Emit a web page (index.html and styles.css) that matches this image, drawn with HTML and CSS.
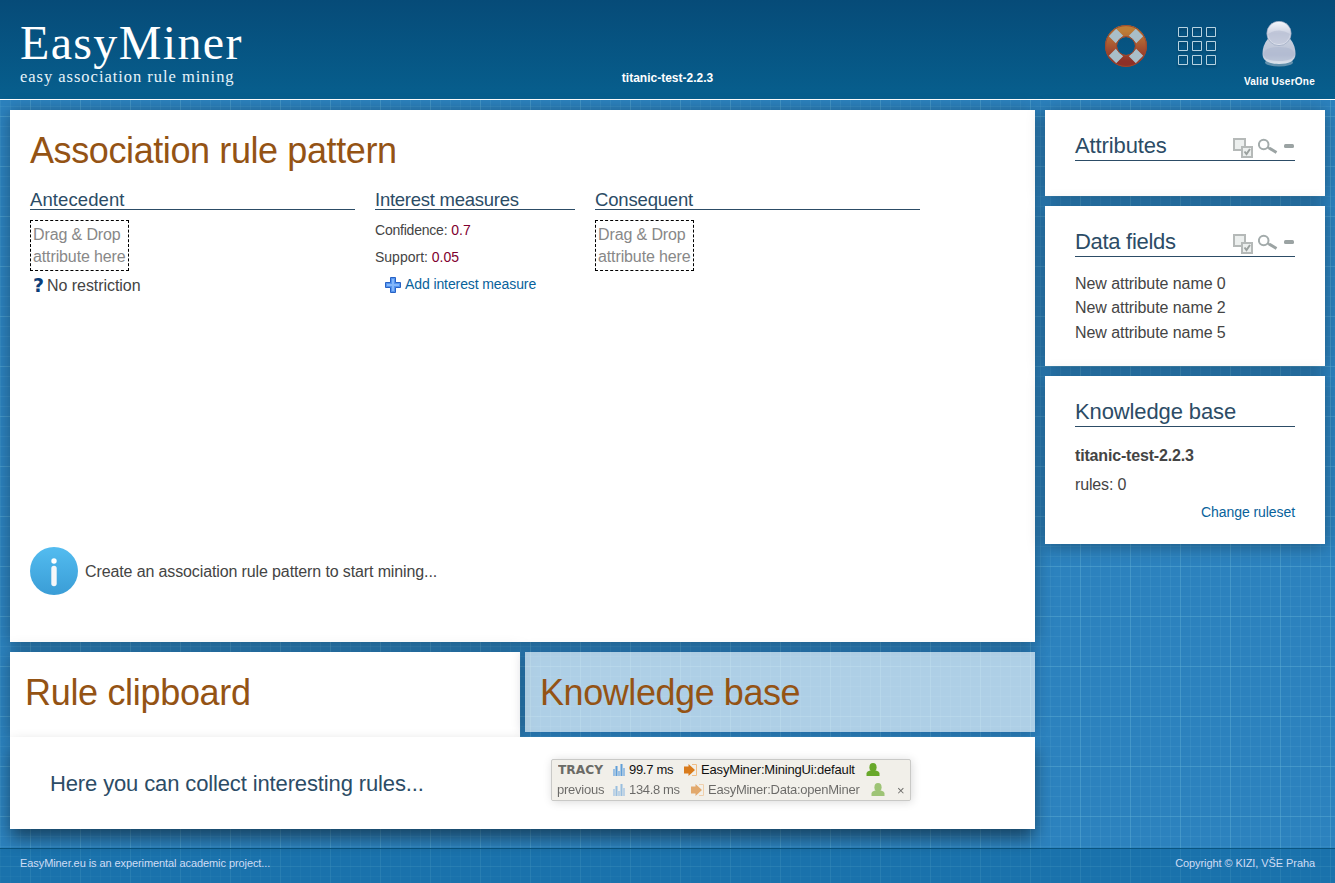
FILE: index.html
```html
<!DOCTYPE html>
<html lang="en">
<head>
<meta charset="utf-8">
<title>EasyMiner</title>
<link rel="stylesheet" href="styles.css">
</head>
<body>
<svg class="defs" width="0" height="0">
  <defs>
    <symbol id="multi" viewBox="0 0 20 20"><rect x="1" y="1" width="11" height="11" fill="#ecefee" stroke="#b5b9b8" stroke-width="2"/><rect x="9" y="9" width="10" height="10" fill="#ecefee" stroke="#b5b9b8" stroke-width="2"/><path d="M11.5 13.5l2 2.5 3.5-5" fill="none" stroke="#9ba19f" stroke-width="2"/></symbol>
    <symbol id="lens" viewBox="0 0 20 20"><circle cx="5.700" cy="6.500" r="4.800" fill="none" stroke="#a3abab" stroke-width="2"/><path d="M9.500 9.300l2 1.200" stroke="#9ba3a3" stroke-width="1.500"/><path d="M11 10l7.500 4.500" stroke="#9ba3a3" stroke-width="3"/></symbol>
    <symbol id="minus" viewBox="0 0 10 20"><rect y="6" width="10" height="4" rx="1.500" fill="#9ba3a3"/></symbol>
    <symbol id="bars" viewBox="0 0 12 12"><g fill="#9bc0e3"><path d="M0 5h2v7H0zM5 7h2v5H5zM10 4h2v8h-2z"/></g><g fill="#5f9ed8"><path d="M2.500 2h2v10h-2zM7.500 0h2v12h-2z"/></g></symbol>
    <symbol id="goto" viewBox="0 0 14 12"><path d="M8 .5h4.500v11H8" fill="none" stroke="#f0bd85"/><path d="M0 2.500h4.500V0L11 6l-6.500 6V9.500H0z" fill="#d97b1c"/></symbol>
    <symbol id="user" viewBox="0 0 14 14"><ellipse cx="7" cy="4.300" rx="3.600" ry="4.300" fill="#68a82a"/><path d="M.5 13V10Q1 8 4 7.500h6q3 .5 3.500 2.500V13z" fill="#68a82a"/></symbol>
  </defs>
</svg>
<header class="header">
  <div class="brand">
    <div class="brand-name">EasyMiner</div>
    <div class="brand-sub">easy association rule mining</div>
  </div>
  <div class="miner-name">titanic-test-2.2.3</div>
  <nav class="tools">
    <svg class="help" viewBox="0 0 42 42">
      <defs><linearGradient id="ring" x2="0" y2="1"><stop offset="0" stop-color="#bd7d37"/><stop offset=".5" stop-color="#a75531"/><stop offset="1" stop-color="#8e3028"/></linearGradient></defs>
      <circle cx="21" cy="21" r="15" fill="none" stroke="url(#ring)" stroke-width="12"/>
      <g stroke="#a9bec8" stroke-width="10.500"><path d="M7.500 7.500l7 7M27.500 27.500l7 7M34.500 7.500l-7 7M14.500 27.500l-7 7"/></g>
      <g fill="none" stroke="#9c482d"><circle cx="21" cy="21" r="20.400"/><circle cx="21" cy="21" r="9.500"/></g>
    </svg>
    <svg class="apps" viewBox="0 0 40 40"><g fill="none" stroke="#b7d3e1"><path d="M1.500 1.500h9v9h-9zM15.500 1.500h9v9h-9zM29.500 1.500h9v9h-9zM1.500 15.500h9v9h-9zM15.500 15.500h9v9h-9zM29.500 15.500h9v9h-9zM1.500 29.500h9v9h-9zM15.500 29.500h9v9h-9zM29.500 29.500h9v9h-9z"/></g></svg>
    <div class="account">
      <svg class="avatar" viewBox="0 0 34 46">
        <defs><linearGradient id="head" x2="0" y2="1"><stop offset="0" stop-color="#f6f8fc"/><stop offset=".5" stop-color="#ccd1e1"/><stop offset="1" stop-color="#dfe3ee"/></linearGradient><linearGradient id="torso" x2="0" y2="1"><stop offset="0" stop-color="#c9d0de"/><stop offset=".65" stop-color="#bac2d6"/><stop offset="1" stop-color="#dfe6ee"/></linearGradient></defs>
        <ellipse cx="17" cy="41.500" rx="14" ry="4" fill="#8ba9bd" opacity=".7"/>
        <path d="M6.500 17Q.5 24 .5 33c0 7 7 10 16.500 10s16.500-3 16.500-10Q33.500 24 27.500 17z" fill="url(#torso)"/>
        <path d="M1.500 33q1-7 15.500-7t15.500 7q-1 7-15.500 7T1.500 33z" fill="#adb7ce" opacity=".6"/>
        <circle cx="17" cy="12.400" r="12.200" fill="url(#head)" stroke="#8f9db8" stroke-width=".6"/>
        <path d="M6 13q11-7 22 0-2 10-11 10T6 13z" fill="#b0b7cd" opacity=".5"/>
      </svg>
      <div class="account-name">Valid UserOne</div>
    </div>
  </nav>
</header>
<main class="layout">
  <div class="main-col">
    <section class="card pattern">
      <h1 class="title">Association rule pattern</h1>
      <div class="cols">
        <div class="cedent">
          <h2 class="sub sub-antecedent">Antecedent</h2>
          <div class="drop"><div>Drag &amp; Drop</div><div>attribute here</div></div>
          <div class="restriction"><span class="question">?</span><span>No restriction</span></div>
        </div>
        <div class="measures">
          <h2 class="sub sub-measures">Interest measures</h2>
          <div class="measure"><span class="measure-name">Confidence:</span> <span class="value">0.7</span></div>
          <div class="measure">Support: <span class="value">0.05</span></div>
          <div class="add"><svg class="plus" viewBox="0 0 16 16"><path d="M5.500.5h5v5h5v5h-5v5h-5v-5h-5v-5h5z" fill="#5595ef" stroke="#2862c5"/><path d="M8 2v12M2 8h12" stroke="#84b7fa" stroke-width="2"/></svg><span>Add interest measure</span></div>
        </div>
        <div class="cedent">
          <h2 class="sub sub-consequent">Consequent</h2>
          <div class="drop"><div>Drag &amp; Drop</div><div>attribute here</div></div>
        </div>
      </div>
      <div class="info">
        <svg class="info-icon" viewBox="0 0 48 48"><defs><linearGradient id="disc" x2="0" y2="1"><stop offset="0" stop-color="#53bcf0"/><stop offset="1" stop-color="#3a9dd6"/></linearGradient></defs><circle cx="24" cy="24" r="24" fill="url(#disc)"/><circle cx="24" cy="14" r="2.700" fill="#fff"/><rect x="21.300" y="18.800" width="5.400" height="20.400" rx="2.700" fill="#f5f7f9"/></svg>
        <span class="info-text">Create an association rule pattern to start mining...</span>
      </div>
    </section>
    <section class="clipboard">
      <div class="tabs">
        <h1 class="tab tab-active">Rule clipboard</h1>
        <h1 class="tab tab-idle">Knowledge base</h1>
      </div>
      <div class="clip-body">
        <p class="clip-text">Here you can collect interesting rules...</p>
      </div>
    </section>
  </div>
  <aside class="side">
    <section class="card panel attributes">
      <h2 class="panel-head"><span>Attributes</span><span class="actions"><svg class="i20"><use href="#multi"/></svg><svg class="i20"><use href="#lens"/></svg><svg class="i10"><use href="#minus"/></svg></span></h2>
    </section>
    <section class="card panel fields">
      <h2 class="panel-head"><span class="fields-title">Data fields</span><span class="actions"><svg class="i20"><use href="#multi"/></svg><svg class="i20"><use href="#lens"/></svg><svg class="i10"><use href="#minus"/></svg></span></h2>
      <ul class="field-list"><li>New attribute name 0</li><li>New attribute name 2</li><li>New attribute name 5</li></ul>
    </section>
    <section class="card panel kb">
      <h2 class="panel-head"><span>Knowledge base</span></h2>
      <div class="kb-name">titanic-test-2.2.3</div>
      <div class="kb-rules">rules: 0</div>
      <div class="kb-link">Change ruleset</div>
    </section>
  </aside>
</main>
<footer class="footer"><span>EasyMiner.eu is an experimental academic project...</span><span>Copyright © KIZI, VŠE Praha</span></footer>
<div class="tracy">
  <div class="tracy-row">
    <svg class="tracy-logo" viewBox="0 0 46 12"><text x="0" y="10" textLength="45" lengthAdjust="spacingAndGlyphs">TRACY</text></svg>
    <svg class="t-bars"><use href="#bars"/></svg><span class="t-time1">99.7 ms</span>
    <svg class="t-goto"><use href="#goto"/></svg><span class="t-name1">EasyMiner:MiningUi:default</span>
    <svg class="t-user"><use href="#user"/></svg>
  </div>
  <div class="tracy-row previous">
    <span class="t-prev">previous</span>
    <svg class="t-bars"><use href="#bars"/></svg><span class="t-time2">134.8 ms</span>
    <svg class="t-goto"><use href="#goto"/></svg><span class="t-name2">EasyMiner:Data:openMiner</span>
    <svg class="t-user"><use href="#user"/></svg><span class="t-close">×</span>
  </div>
</div>
</body>
</html>
```
FILE: styles.css
```css
* { box-sizing: border-box; }
html, body { margin: 0; height: 100%; }
body {
  height: 883px; overflow: hidden; display: flex; flex-direction: column;
  font-family: "Liberation Sans", Arial, sans-serif; font-size: 16px; color: #444;
  background-color: #2c82be;
  background-image:
    linear-gradient(to right, rgba(100,180,215,.3) 1px, transparent 1px),
    linear-gradient(to bottom, rgba(100,180,215,.3) 1px, transparent 1px),
    linear-gradient(to right, rgba(100,180,215,.16) 1px, transparent 1px),
    linear-gradient(to bottom, rgba(100,180,215,.16) 1px, transparent 1px);
  background-size: 50px 50px, 50px 50px, 10px 10px, 10px 10px;
  background-position: 30px 16px, 30px 16px, 0 6px, 0 6px;
}
h1, h2, p, ul { margin: 0; padding: 0; font-weight: normal; }
.defs { position: absolute; }
svg { display: block; flex: none; }
span, div, h1, h2, li { white-space: nowrap; }

.header {
  flex: none; height: 100px; border-bottom: 1px solid #fff; padding: 0 20px;
  display: grid; grid-template-columns: 1fr auto 1fr;
  background: linear-gradient(#064b78, #075f8e); color: #fff;
}
.brand { font-family: "Liberation Serif", serif; }
.brand-name { padding-top: 19px; font-size: 48px; line-height: 48px; letter-spacing: 1.350px; }
.brand-sub { font-size: 16.500px; line-height: 20px; letter-spacing: .970px; color: #e8f4fa; }
.miner-name { padding-top: 70px; font-size: 12px; line-height: 16px; font-weight: bold; }
.tools { display: flex; justify-content: flex-end; align-items: flex-start; }
.help { width: 42px; height: 42px; margin: 25px 30px 0 0; }
.apps { width: 40px; height: 40px; margin: 26px 27px 0 0; filter: drop-shadow(0 2px 1px rgba(0,0,0,.25)); }
.account { display: flex; flex-direction: column; align-items: center; padding-top: 21px; }
.avatar { width: 34px; height: 46px; }
.account-name { margin-top: 8px; font-size: 10px; line-height: 13px; font-weight: bold; letter-spacing: .25px; }

.layout { flex: 1; display: flex; gap: 10px; padding: 10px 10px 0; }
.main-col { width: 1025px; }
.card { background: #fff; box-shadow: 0 2px 16px rgba(0,0,0,.34); }
.pattern { height: 532px; padding: 20px; display: flex; flex-direction: column; }
.title, .tab { font-size: 36px; line-height: 42px; color: #945314; letter-spacing: -.400px; }
.cols { margin-top: 16px; display: flex; gap: 20px; }
.cedent { width: 325px; }
.measures { width: 200px; }
.sub { height: 22px; font-size: 18.500px; line-height: 24px; color: #2c4c66; border-bottom: 1px solid #2c4c66; }
.sub-antecedent { letter-spacing: .100px; }
.sub-measures { letter-spacing: -.250px; }
.sub-consequent { letter-spacing: -.170px; }
.drop { margin-top: 10px; width: 99px; height: 51px; border: 1px dashed #000; padding: 3px 2px; color: #888; line-height: 22px; letter-spacing: -.120px; }
.restriction { display: flex; align-items: center; height: 28px; padding: 1px 0 0 3px; gap: 4px; letter-spacing: -.050px; }
.question { width: 10px; color: #0b3d78; font: bold 19px/28px "DejaVu Sans", sans-serif; margin-top: -2px; letter-spacing: -1px; }
.measure { height: 27px; font-size: 14px; line-height: 20px; }
.sub + .measure { margin-top: 10px; }
.measure-name { letter-spacing: -.220px; }
.value { color: #80002f; }
.add { display: flex; gap: 4px; padding-left: 10px; color: #08629b; font-size: 14px; line-height: 19px; letter-spacing: -.100px; margin-top: 1px; }
.plus { width: 16px; height: 16px; margin-top: 2px; }
.info { margin-top: auto; margin-bottom: 27px; display: flex; align-items: center; gap: 7px; }
.info-text { padding-top: 2px; letter-spacing: -.120px; }
.info-icon { width: 48px; height: 48px; }

.clipboard { margin-top: 10px; height: 177px; }
.tabs { display: flex; gap: 5px; height: 85px; }
.tab { width: 510px; height: 80px; padding: 20px 15px; }
.tab-active { height: 85px; background: #fff; box-shadow: 0 2px 16px rgba(0,0,0,.34); letter-spacing: -.320px; }
.tab-idle { background: rgba(255,255,255,.62); box-shadow: 0 0 12px rgba(0,20,50,.3); letter-spacing: -.430px; }
.clip-body { position: relative; height: 92px; background: #fff; padding: 34px 40px; box-shadow: 0 10px 16px -1px rgba(0,0,0,.48); }
.clip-text { font-size: 22px; line-height: 26px; color: #2c4c66; letter-spacing: -.130px; }

.side { width: 280px; display: flex; flex-direction: column; gap: 10px; }
.panel { padding: 22px 30px 0; }
.attributes { height: 86px; }
.fields { height: 160px; }
.kb { height: 168px; }
.panel-head { display: flex; justify-content: space-between; height: 29px; border-bottom: 1px solid #2c4c66; color: #2c4c66; font-size: 22px; line-height: 28px; letter-spacing: -.120px; }
.fields-title { letter-spacing: -.300px; }
.actions { display: flex; gap: 5px; padding: 6px 1px 0 0; }
.i20 { width: 20px; height: 20px; }
.i10 { width: 10px; height: 20px; margin-left: 1px; }
.field-list { margin-top: 14.600px; list-style: none; line-height: 24.500px; letter-spacing: -.070px; }
.kb-name { margin-top: 19px; line-height: 20px; font-weight: bold; letter-spacing: -.170px; }
.kb-rules { margin-top: 9px; line-height: 20px; letter-spacing: -.150px; }
.kb-link { margin-top: 8px; text-align: right; font-size: 14px; line-height: 18px; color: #08629b; letter-spacing: -.070px; }

.footer { flex: none; height: 35px; border-top: 1px solid #0a5580; padding: 7px 20px; display: flex; justify-content: space-between; background: rgba(0,90,145,.4); color: #cfdcf5; font-size: 11px; line-height: 14px; letter-spacing: -.080px; }

.tracy { position: absolute; left: 551px; top: 759px; width: 360px; height: 42px; border: 1px solid #c9c9c7; border-radius: 2px; background: #f1efe9; box-shadow: 1px 1px 10px rgba(0,0,0,.15); color: #111; font-size: 13px; }
.tracy-row { display: flex; align-items: center; height: 20px; padding-left: 5px; line-height: 16px; }
.previous { background: #f4f2ec; opacity: .6; }
.tracy-logo { width: 46px; height: 12px; margin: 0 9px 0 1px; }
.tracy-logo text { font: bold 12px "DejaVu Sans", sans-serif; fill: #6b6b66; }
.t-bars { width: 12px; height: 12px; margin-right: 4px; }
.t-time1 { width: 55px; letter-spacing: -.300px; }
.t-goto { width: 14px; height: 12px; margin-right: 3px; }
.t-name1 { width: 165px; letter-spacing: -.170px; }
.t-prev { width: 56px; letter-spacing: -.250px; }
.t-time2 { width: 62px; letter-spacing: -.350px; }
.t-name2 { width: 163px; letter-spacing: -.250px; }
.t-user { width: 14px; height: 14px; }
.t-close { margin: 1px 0 0 12px; }
```
